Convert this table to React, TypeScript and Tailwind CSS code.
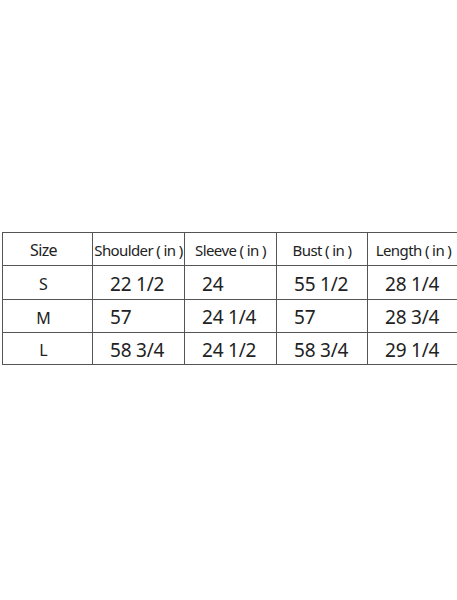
const headers = ["Size", "Shoulder ( in )", "Sleeve ( in )", "Bust ( in )", "Length ( in )"]

const rows = [
  ["S", "22 1/2", "24", "55 1/2", "28 1/4"],
  ["M", "57", "24 1/4", "57", "28 3/4"],
  ["L", "58 3/4", "24 1/2", "58 3/4", "29 1/4"],
]

const rowHeights = ["h-[34px]", "h-[33px]", "h-[32px]"]

export default function App() {
  return (
    <div className="h-[600px] w-[457px] overflow-hidden bg-white pt-[232px] pl-[2px] font-['Noto_Sans',sans-serif] text-[#222]">
      <div className="grid w-[460px] grid-cols-[90px_92px_92px_91px_92px] border-l border-t border-[#555]">
        {headers.map((h, j) => (
          <div
            key={h}
            className={
              "flex h-[33px] items-center justify-center whitespace-nowrap border-b border-r border-[#555] pt-[2px] tracking-[-0.6px] " +
              (j === 0 ? "pr-[8px] text-[16px]" : "text-[15px]")
            }
          >
            {h}
          </div>
        ))}
        {rows.map((r, i) =>
          r.map((c, j) => (
            <div
              key={i + "-" + j}
              className={
                "flex items-center border-b border-r border-[#555] pt-[3px] " +
                rowHeights[i] +
                (j === 0 ? " justify-center pr-[8px] text-[16px]" : " pl-[17px] text-[19px] tracking-[-0.2px]")
              }
            >
              {c}
            </div>
          ))
        )}
      </div>
    </div>
  )
}
